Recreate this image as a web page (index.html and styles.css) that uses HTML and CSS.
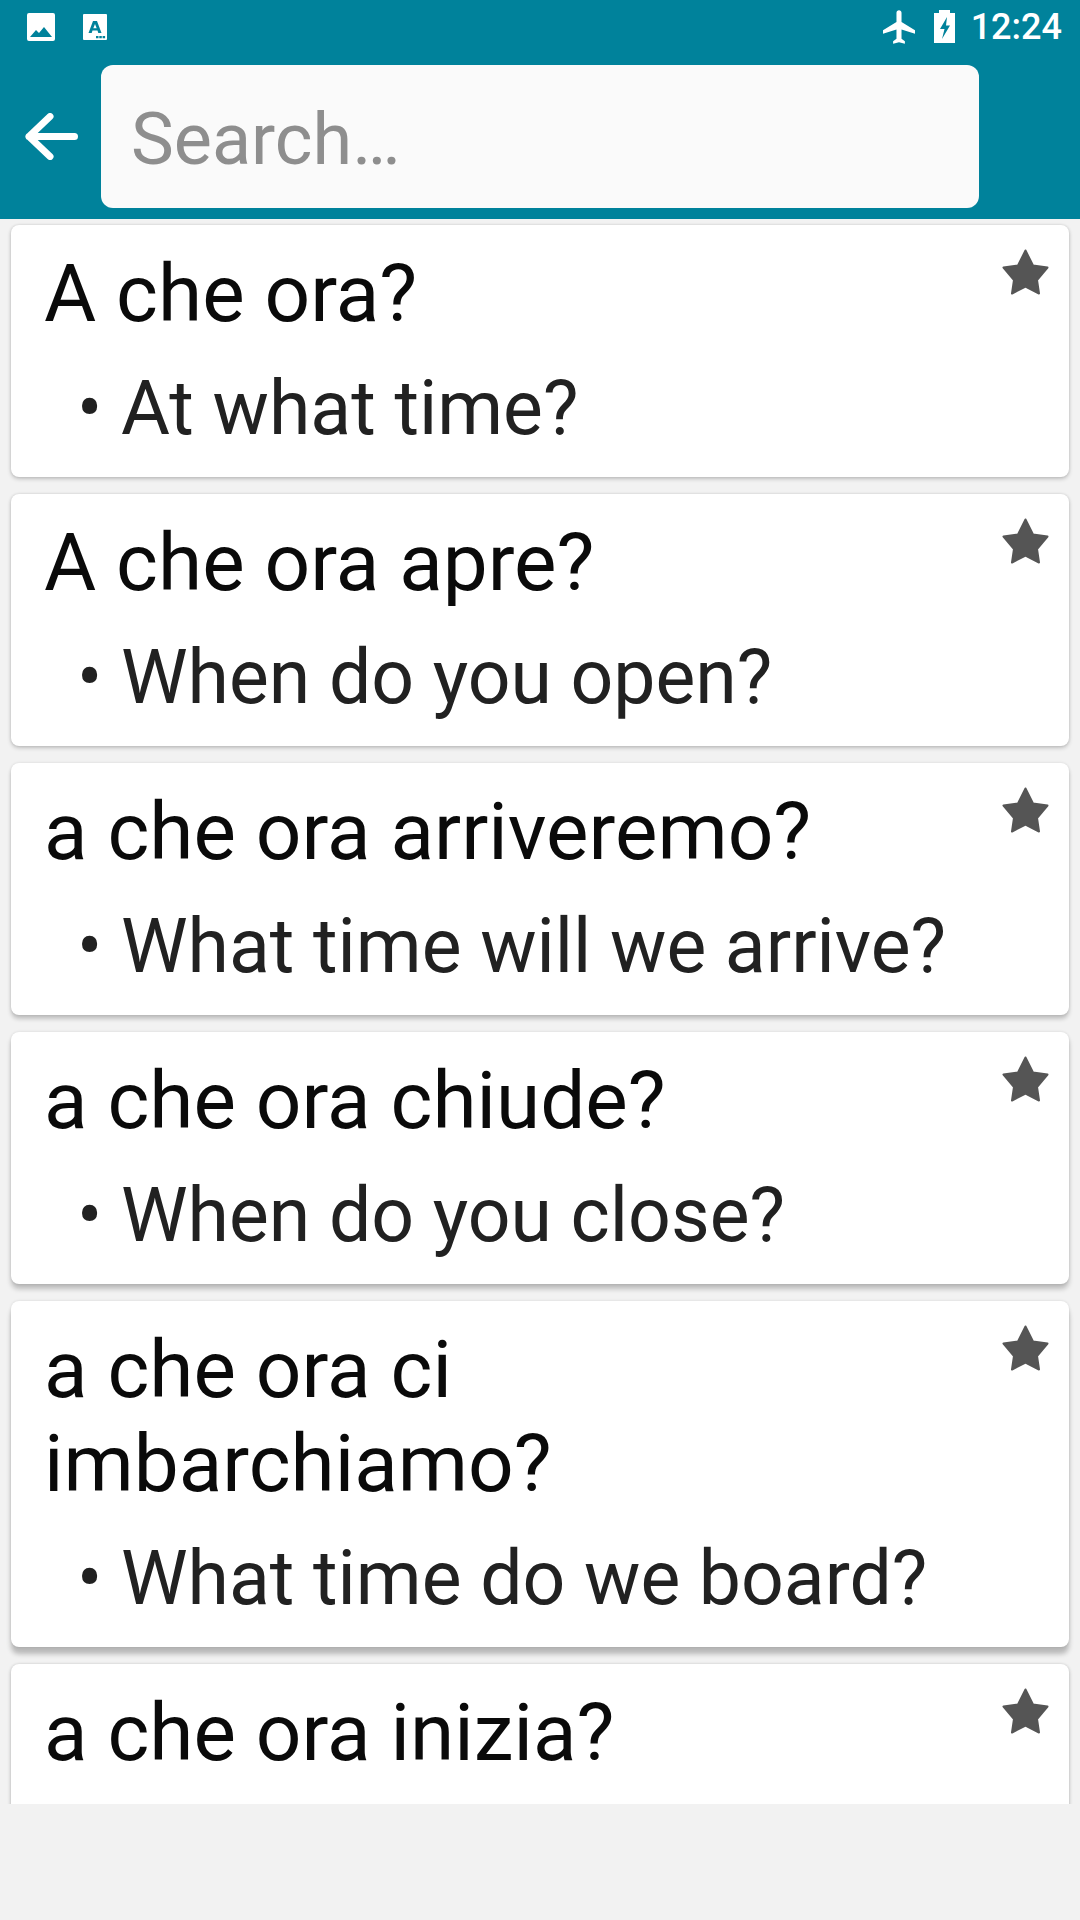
FILE: index.html
```html
<!DOCTYPE html>
<html lang="it">
<head>
<meta charset="UTF-8">
<meta name="viewport" content="width=device-width, initial-scale=1.0">
<title>Search</title>
<link rel="stylesheet" href="styles.css">
</head>
<body>
<div class="screen">
  <header class="header">
    <div class="status-bar">
      <div class="status-left">
        <svg class="icon-image" viewBox="0 0 28 28"><path fill="#fff" fill-rule="evenodd" d="M2 0h24a2 2 0 0 1 2 2v24a2 2 0 0 1-2 2H2a2 2 0 0 1-2-2V2a2 2 0 0 1 2-2zM3 24h22l-8-10-5 6-3-3z"/></svg>
        <svg class="icon-font" viewBox="0 0 24 26"><path fill="#fff" d="M1 0h22a1 1 0 0 1 1 1v24a1 1 0 0 1-1 1H1a1 1 0 0 1-1-1V1a1 1 0 0 1 1-1z"/><path fill="#00829b" fill-rule="evenodd" d="M10 7h4l4.500 12h-3.200l-.8-2.500h-5L8.700 19H5.500zM12 10l-1.700 4.200h3.400z"/><path fill="#00829b" d="M13 22h2.500v2.200H13zM16.300 22h2.500v2.200h-2.500zM19.600 22h2.500v2.200h-2.500z"/></svg>
      </div>
      <div class="status-right">
        <svg class="icon-plane" viewBox="2 2 19 20"><path fill="#fff" d="M21 16v-2l-8-5V3.500c0-.83-.67-1.500-1.500-1.500S10 2.670 10 3.500V9l-8 5v2l8-2.500V19l-2 1.500V22l3.500-1 3.500 1v-1.500L13 19v-5.500z"/></svg>
        <svg class="icon-battery" viewBox="0 0 21 33"><path fill="#fff" d="M5 0h11v3h5v30H0V3h5z"/><path fill="#00829b" d="M13 7L6 19h4.500L8 29l8-13.500h-4z"/></svg>
        <span class="clock">12:24</span>
      </div>
    </div>
    <div class="search-row">
      <svg class="icon-back" viewBox="0 0 53 47"><path fill="none" stroke="#fff" stroke-width="7" stroke-linecap="round" stroke-linejoin="round" d="M25 3.500L4 23.500l21 20M4 23.500h45.500"/></svg>
      <div class="search-box">Search…</div>
    </div>
  </header>

  <main class="list">
    <article class="card">
      <svg class="star" viewBox="0 0 47 46"><path d="M23.500 1.500L31 16.500l14.500 2-10.500 12.500 2 13.500-13.500-7-13.500 7 2-13.500L1.500 18.500l14.500-2z"/></svg>
      <div class="phrase">A che ora?</div>
      <div class="meaning"><span class="dot">•</span><span>At what time?</span></div>
    </article>
    <article class="card">
      <svg class="star" viewBox="0 0 47 46"><path d="M23.500 1.500L31 16.500l14.500 2-10.500 12.500 2 13.500-13.500-7-13.500 7 2-13.500L1.500 18.500l14.500-2z"/></svg>
      <div class="phrase">A che ora apre?</div>
      <div class="meaning"><span class="dot">•</span><span>When do you open?</span></div>
    </article>
    <article class="card">
      <svg class="star" viewBox="0 0 47 46"><path d="M23.500 1.500L31 16.500l14.500 2-10.500 12.500 2 13.500-13.500-7-13.500 7 2-13.500L1.500 18.500l14.500-2z"/></svg>
      <div class="phrase">a che ora arriveremo?</div>
      <div class="meaning"><span class="dot">•</span><span>What time will we arrive?</span></div>
    </article>
    <article class="card">
      <svg class="star" viewBox="0 0 47 46"><path d="M23.500 1.500L31 16.500l14.500 2-10.500 12.500 2 13.500-13.500-7-13.500 7 2-13.500L1.500 18.500l14.500-2z"/></svg>
      <div class="phrase">a che ora chiude?</div>
      <div class="meaning"><span class="dot">•</span><span>When do you close?</span></div>
    </article>
    <article class="card">
      <svg class="star" viewBox="0 0 47 46"><path d="M23.500 1.500L31 16.500l14.500 2-10.500 12.500 2 13.500-13.500-7-13.500 7 2-13.500L1.500 18.500l14.500-2z"/></svg>
      <div class="phrase">a che ora ci<br>imbarchiamo?</div>
      <div class="meaning"><span class="dot">•</span><span>What time do we board?</span></div>
    </article>
    <article class="card">
      <svg class="star" viewBox="0 0 47 46"><path d="M23.500 1.500L31 16.500l14.500 2-10.500 12.500 2 13.500-13.500-7-13.500 7 2-13.500L1.500 18.500l14.500-2z"/></svg>
      <div class="phrase">a che ora inizia?</div>
    </article>
  </main>
</div>
</body>
</html>
```

FILE: styles.css
```css
* {
  box-sizing: border-box;
}

html, body {
  margin: 0;
  background-color: #f2f2f2;
}

body {
  font-family: Roboto, Arial, sans-serif;
}

.screen {
  height: 1804px;
  overflow: hidden;
}

.header {
  height: 219px;
  background-color: #00829b;
}

.status-bar {
  display: flex;
  justify-content: space-between;
  align-items: center;
  height: 53px;
  padding: 0 18px 0 27px;
  color: #fff;
}

.status-left {
  display: flex;
  align-items: center;
  gap: 28px;
}

.status-right {
  display: flex;
  align-items: center;
}

.icon-image {
  width: 28px;
  height: 28px;
}

.icon-font {
  width: 24px;
  height: 26px;
}

.icon-plane {
  width: 32px;
  height: 34px;
  margin-right: 19px;
}

.icon-battery {
  width: 21px;
  height: 33px;
  margin-right: 16px;
}

.clock {
  font-size: 36px;
  font-weight: 500;
}

.search-row {
  display: flex;
  align-items: center;
  height: 143px;
  margin-top: 12px;
  padding-left: 25px;
}

.icon-back {
  width: 53px;
  height: 47px;
  margin-right: 23px;
}

.search-box {
  display: flex;
  align-items: center;
  width: 878px;
  height: 143px;
  padding: 6px 0 0 30px;
  background-color: #fafafa;
  border-radius: 12px;
  color: #8e8e8e;
  font-size: 72px;
}

.list {
  display: flex;
  flex-direction: column;
  gap: 17px;
  padding: 6px 11px 0;
}

.card {
  position: relative;
  flex: none;
  min-height: 252px;
  padding: 22px 33px 25px;
  background-color: #fff;
  border-radius: 8px;
  box-shadow: 0 0 3px rgba(0, 0, 0, 0.12), 0 2px 4px rgba(0, 0, 0, 0.2);
}

.card:nth-child(3) {
  box-shadow: 0 0 3px rgba(0, 0, 0, 0.12), 0 4px 4px rgba(0, 0, 0, 0.2);
}

.card:nth-child(4) {
  box-shadow: 0 0 3px rgba(0, 0, 0, 0.12), 0 5px 5px rgba(0, 0, 0, 0.22);
}

.card:nth-child(5) {
  box-shadow: 0 0 3px rgba(0, 0, 0, 0.12), 0 7px 5px rgba(0, 0, 0, 0.24);
}

.star {
  position: absolute;
  top: 24px;
  right: 20px;
  width: 47px;
  height: 46px;
  fill: #555;
  stroke: #555;
  stroke-width: 2;
  stroke-linejoin: round;
}

.phrase {
  font-size: 80.1px;
  line-height: 94px;
  color: #0a0a0a;
}

.meaning {
  display: flex;
  margin-top: 23px;
  padding-left: 33px;
  font-size: 75.1px;
  line-height: 88px;
  color: #212121;
}

.dot {
  width: 44px;
}
```
